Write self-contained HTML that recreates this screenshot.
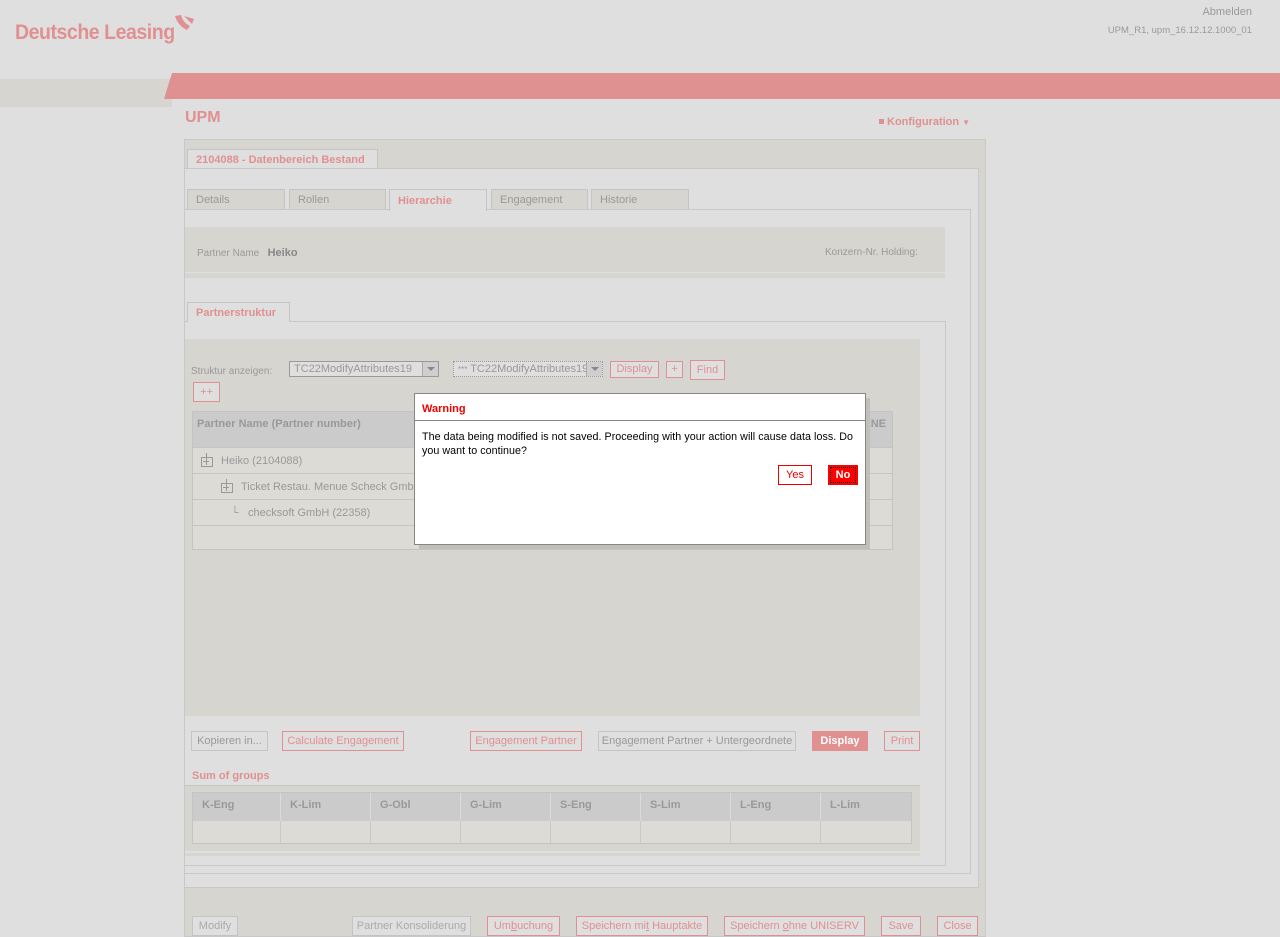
<!DOCTYPE html>
<html><head><meta charset="utf-8"><style>
*{box-sizing:border-box;margin:0;padding:0}
body{width:1280px;height:937px;background:#dfdfdf;font-family:"Liberation Sans",Arial,sans-serif;font-size:11px;color:#999;position:relative;overflow:hidden}
.a{position:absolute}
.btn{position:absolute;height:20px;border:1px solid #e09090;color:#e09090;background:#dfdfdf;font-size:11px;line-height:18px;text-align:center;white-space:nowrap}
.btng{border-color:#c4c4c4;color:#999}
.tab{position:absolute;height:21px;border:1px solid #c4c4c4;border-bottom:none;background:#d6d5d0;color:#999;font-size:11px;line-height:21px;padding-left:8px}
.sel{position:absolute;height:16px;border:1px solid #999;background:#dfdfdf;color:#999;font-size:11px;line-height:14px;padding-left:4px;overflow:hidden;white-space:nowrap}
.sel i{position:absolute;right:0;top:0;width:16px;height:14px;background:#cfcfcf;border-left:1px solid #aaa}
.sel i:after{content:"";position:absolute;left:4px;top:5px;border:4px solid transparent;border-top:4px solid #888}
.row{position:absolute;left:0;width:100%;height:26px;border-top:1px solid #c4c4c4;line-height:26px;color:#999;font-size:11px}
.ti{display:inline-block;position:relative;width:17px;height:14px;vertical-align:-3px;margin-right:3px}
.ti:before{content:"";position:absolute;left:0;top:4px;width:10px;height:8px;border:1px solid #999}
.ti:after{content:"";position:absolute;left:5px;top:0;width:10px;height:12px;border-left:1px solid #999;border-top:0}
.tl{position:absolute;left:2px;top:8px;width:6px;height:1px;background:#999}
</style></head><body>
<div class="a" style="left:15px;top:21px;font-size:21px;font-weight:bold;color:#e09090;letter-spacing:-0.5px;transform:scaleX(0.93);transform-origin:left">Deutsche Leasing</div>
<svg class="a" style="left:174px;top:14px" width="22" height="20"><path d="M1 2 Q4 12 13 16 L16 12 Q9 9 7 1 Z" fill="#e09090"/><path d="M10 2 L20 5 L18 10 Z" fill="#e09090"/></svg>
<div class="a" style="right:28px;top:6px;font-size:11px;color:#999">Abmelden</div>
<div class="a" style="right:28px;top:25px;font-size:9.5px;color:#999">UPM_R1, upm_16.12.12.1000_01</div>
<div class="a" style="left:0;top:79px;width:172px;height:28px;background:#d6d5d0"></div>
<svg class="a" style="left:164px;top:73px" width="1116" height="26"><polygon points="8,0 1116,0 1116,26 0,26" fill="#df9090"/></svg>
<div class="a" style="left:185px;top:109px;font-size:16px;font-weight:bold;color:#e09090">UPM</div>
<div class="a" style="left:879px;top:116px;font-size:11px;font-weight:bold;color:#e09090"><span style="display:inline-block;width:5px;height:5px;background:#e09090;margin-right:3px;vertical-align:1px"></span>Konfiguration <span style="font-size:8px">▼</span></div>

<div class="a" style="left:184px;top:139px;width:802px;height:798px;background:#d6d5d0;border:1px solid #c8c8c8"></div>
<div class="tab" style="left:187px;top:149px;width:191px;height:20px;background:#dfdfdf;color:#e09090;font-weight:bold;line-height:20px">2104088 - Datenbereich Bestand</div>
<div class="a" style="left:185px;top:168px;width:794px;height:720px;background:#dfdfdf;border:1px solid #c8c8c8;border-left:none"></div>
<div class="tab" style="left:187px;top:189px;width:98px">Details</div>
<div class="tab" style="left:289px;top:189px;width:97px">Rollen</div>
<div class="tab" style="left:389px;top:189px;width:98px;background:#dfdfdf;color:#e09090;font-weight:bold;height:22px;z-index:2;line-height:23px">Hierarchie</div>
<div class="tab" style="left:491px;top:189px;width:97px">Engagement</div>
<div class="tab" style="left:591px;top:189px;width:98px">Historie</div>
<div class="a" style="left:185px;top:209px;width:786px;height:665px;border:1px solid #c8c8c8;border-left:none"></div>
<div class="a" style="left:185px;top:227px;width:760px;height:45px;background:#d6d5d0"></div>
<div class="a" style="left:185px;top:273px;width:760px;height:5px;background:#d6d5d0"></div>
<div class="a" style="left:197px;top:247px;font-size:10px;color:#999">Partner Name &nbsp;&nbsp;<b style="font-size:11px;color:#888">Heiko</b></div>
<div class="a" style="left:825px;top:247px;font-size:10px;color:#999">Konzern-Nr. Holding:</div>

<div class="tab" style="left:187px;top:302px;width:103px;height:20px;background:#dfdfdf;color:#e09090;font-weight:bold;line-height:20px;z-index:2">Partnerstruktur</div>
<div class="a" style="left:185px;top:321px;width:761px;height:545px;border:1px solid #c8c8c8;border-left:none"></div>
<div class="a" style="left:185px;top:339px;width:735px;height:377px;background:#d6d5d0"></div>
<div class="a" style="left:191px;top:366px;font-size:10px">Struktur anzeigen:</div>
<div class="sel" style="left:289px;top:361px;width:150px">TC22ModifyAttributes19<i></i></div>
<div class="sel" style="left:453px;top:361px;width:150px;border-style:dotted"><span style="font-size:8px">***</span> TC22ModifyAttributes19<i></i></div>
<div class="btn" style="left:610px;top:361px;width:49px;height:17px;line-height:15px">Display</div>
<div class="btn" style="left:666px;top:361px;width:17px;height:17px;line-height:15px">+</div>
<div class="btn" style="left:690px;top:360px;width:35px;height:20px">Find</div>
<div class="btn" style="left:193px;top:382px;width:27px;height:20px">++</div>

<div class="a" style="left:192px;top:411px;width:701px;height:139px;border:1px solid #c4c4c4;background:#dcdbd6">
<div class="a" style="left:0;top:0;width:100%;height:35px;background:#cbcbcb;font-weight:bold;padding:6px 4px;color:#999">Partner Name (Partner number)<span style="position:absolute;right:6px">KNE</span></div>
<div class="row" style="top:35px;padding-left:8px"><span class="ti"><span class="tl"></span></span>Heiko (2104088)</div>
<div class="row" style="top:61px;padding-left:28px"><span class="ti"><span class="tl"></span></span>Ticket Restau. Menue Scheck GmbH</div>
<div class="row" style="top:87px;padding-left:38px">└&nbsp;&nbsp; checksoft GmbH (22358)</div>
<div class="row" style="top:113px"></div>
</div>

<div class="btn btng" style="left:191px;top:731px;width:77px">Kopieren in...</div>
<div class="btn" style="left:282px;top:731px;width:122px">Calculate Engagement</div>
<div class="btn" style="left:470px;top:731px;width:112px">Engagement Partner</div>
<div class="btn btng" style="left:598px;top:731px;width:198px">Engagement Partner + Untergeordnete</div>
<div class="btn" style="left:812px;top:731px;width:56px;background:#e09090;color:#fff;font-weight:bold">Display</div>
<div class="btn" style="left:884px;top:731px;width:36px">Print</div>
<div class="a" style="left:192px;top:770px;font-weight:bold;color:#e09090">Sum of groups</div>
<div class="a" style="left:185px;top:785px;width:735px;height:71px;background:#d6d5d0;border-top:1px solid #c4c4c4"></div>
<div class="a" style="left:185px;top:851px;width:735px;height:2px;background:#dfdfdf"></div>
<div class="a" style="left:192px;top:792px;width:720px;height:52px;border:1px solid #c4c4c4;background:#dcdbd6">
<div style="display:flex;height:28px;background:#cbcbcb;font-weight:bold">
<div style="width:88px;border-right:1px solid #dcdbd6;padding:6px 9px">K-Eng</div><div style="width:90px;border-right:1px solid #dcdbd6;padding:6px 9px">K-Lim</div><div style="width:90px;border-right:1px solid #dcdbd6;padding:6px 9px">G-Obl</div><div style="width:90px;border-right:1px solid #dcdbd6;padding:6px 9px">G-Lim</div><div style="width:90px;border-right:1px solid #dcdbd6;padding:6px 9px">S-Eng</div><div style="width:90px;border-right:1px solid #dcdbd6;padding:6px 9px">S-Lim</div><div style="width:90px;border-right:1px solid #dcdbd6;padding:6px 9px">L-Eng</div><div style="width:90px;padding:6px 9px">L-Lim</div></div>
<div style="display:flex;height:22px"><div style="width:88px;border-right:1px solid #c8c8c8"></div><div style="width:90px;border-right:1px solid #c8c8c8"></div><div style="width:90px;border-right:1px solid #c8c8c8"></div><div style="width:90px;border-right:1px solid #c8c8c8"></div><div style="width:90px;border-right:1px solid #c8c8c8"></div><div style="width:90px;border-right:1px solid #c8c8c8"></div><div style="width:90px;border-right:1px solid #c8c8c8"></div></div>
</div>

<div class="btn btng" style="left:192px;top:916px;width:46px;color:#aaa">Modify</div>
<div class="btn btng" style="left:352px;top:916px;width:119px;color:#aaa">Partner Konsoliderung</div>
<div class="btn" style="left:487px;top:916px;width:73px">Um<u>b</u>uchung</div>
<div class="btn" style="left:576px;top:916px;width:132px">Speichern mi<u>t</u> Hauptakte</div>
<div class="btn" style="left:724px;top:916px;width:141px">Speichern <u>o</u>hne UNISERV</div>
<div class="btn" style="left:881px;top:916px;width:40px">Save</div>
<div class="btn" style="left:937px;top:916px;width:41px">Close</div>

<div class="a" style="left:419px;top:398px;width:451px;height:151px;background:#c0bfbb"></div>
<div class="a" style="left:414px;top:393px;width:452px;height:152px;background:#fff;border:1px solid #8a8580">
<div style="height:27px;border-bottom:1px solid #8a8580;color:#e00;font-weight:bold;font-size:11px;padding:9px 7px 0">Warning</div>
<div style="color:#000;font-size:10.7px;line-height:14px;padding:9px 7px 0;letter-spacing:0.05px">The data being modified is not saved. Proceeding with your action will cause data loss. Do you want to continue?</div>
<div class="a" style="left:363px;top:71px;width:34px;height:20px;border:1px solid #e00;color:#e00;text-align:center;line-height:18px">Yes</div>
<div class="a" style="left:413px;top:71px;width:30px;height:20px;background:#f00;color:#fff;font-weight:bold;text-align:center;line-height:18px;padding:2px"><div style="border:1px dotted #000;line-height:14px">No</div></div>
</div>
</body></html>
